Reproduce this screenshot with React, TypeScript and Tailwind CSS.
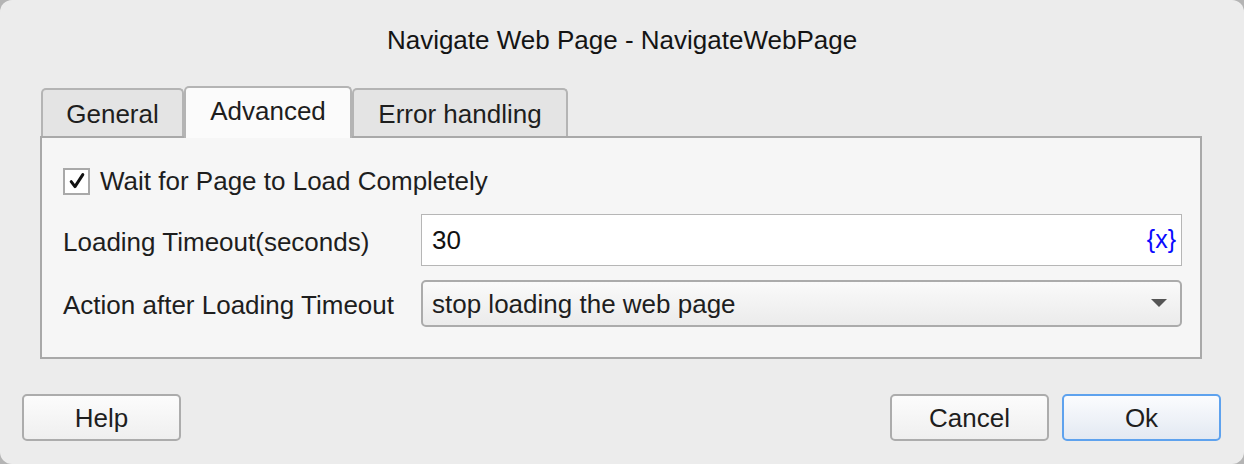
import React from "react";

export default function App() {
  const font = { fontFamily: '"Liberation Sans", Arial, sans-serif' };
  return (
    <div className="w-[1244px] h-[464px] bg-[#b4b4b4]" style={font}>
      <div className="w-full h-full rounded-[12px] bg-[#ececec] flex flex-col text-[#1e1e1e]">
        {/* Title */}
        <div className="h-[80px] flex items-center justify-center pt-[1px]">
          <span className="text-[26px] text-[#141414]">Navigate Web Page - NavigateWebPage</span>
        </div>

        {/* Tabs + panel */}
        <div className="ml-[40px] mr-[42px] flex flex-col">
          <div className="flex items-end h-[56px] pl-[1px] relative z-10">
            <div className="w-[143px] h-[48px] bg-[#e4e4e4] border-[2px] border-b-0 border-[#b4b4b4] rounded-t-[5px] flex items-center justify-center text-[26px] pt-[2px]">
              General
            </div>
            <div className="w-[168px] h-[52px] bg-[#fbfbfb] border-[2px] border-b-0 border-[#b4b4b4] rounded-t-[5px] flex items-center justify-center text-[26px] mb-[-2px] pb-[4px]">
              Advanced
            </div>
            <div className="w-[216px] h-[48px] bg-[#e4e4e4] border-[2px] border-b-0 border-[#b4b4b4] rounded-t-[5px] flex items-center justify-center text-[26px] pt-[2px]">
              Error handling
            </div>
          </div>
          <div className="h-[223px] bg-[#f6f6f6] border-[2px] border-[#a9a9a9] pl-[21px] pr-[18px] pt-[29px]">
            {/* checkbox row */}
            <div className="flex items-center h-[28px]">
              <div className="w-[27px] h-[27px] bg-white border-[2px] border-[#a9a9a9] flex items-center justify-center">
                <svg width="18" height="18" viewBox="0 0 18 18">
                  <path d="M3.2 9.6 L7 14.6 L14.8 2.6" fill="none" stroke="#111" strokeWidth="3" strokeLinecap="round" strokeLinejoin="round" />
                </svg>
              </div>
              <span className="ml-[10px] text-[26px]">Wait for Page to Load Completely</span>
            </div>
            {/* Loading timeout */}
            <div className="flex items-center mt-[19px]">
              <span className="w-[358px] text-[26px] pt-[4px]">Loading Timeout(seconds)</span>
              <div className="flex-1 h-[52px] bg-white border border-[#b6b6b6] flex items-center justify-between pl-[10px] pr-[5px]">
                <span className="text-[26px] text-[#111]">30</span>
                <span className="text-[25px] text-[#0a0aff]">{"{x}"}</span>
              </div>
            </div>
            {/* Action after */}
            <div className="flex items-center mt-[14px]">
              <span className="w-[358px] text-[26px] pt-[4px]">Action after Loading Timeout</span>
              <div className="flex-1 h-[47px] rounded-[5px] border-[2px] border-[#ababab] bg-gradient-to-b from-[#fafafa] to-[#ebebeb] flex items-center justify-between pl-[9px] pr-[13px]">
                <span className="text-[26px] pt-[2px]">stop loading the web page</span>
                <svg width="16" height="9" viewBox="0 0 16 9">
                  <path d="M0 0 H16 L8 8 Z" fill="#555" />
                </svg>
              </div>
            </div>
          </div>
        </div>

        {/* Buttons */}
        <div className="flex items-center mt-[35px] pl-[22px] pr-[23px]">
          <button className="w-[159px] h-[47px] rounded-[5px] border-[2px] border-[#acacac] bg-gradient-to-b from-[#fcfcfc] to-[#efefef] text-[26px] pt-[1px]">
            Help
          </button>
          <div className="flex-1" />
          <button className="w-[159px] h-[47px] rounded-[5px] border-[2px] border-[#acacac] bg-gradient-to-b from-[#fcfcfc] to-[#efefef] text-[26px] pt-[1px]">
            Cancel
          </button>
          <button className="ml-[13px] w-[159px] h-[47px] rounded-[5px] border-[2px] border-[#5ea2ee] bg-gradient-to-b from-[#fbfcfe] to-[#e3e9f2] text-[26px] pt-[1px]">
            Ok
          </button>
        </div>
      </div>
    </div>
  );
}
